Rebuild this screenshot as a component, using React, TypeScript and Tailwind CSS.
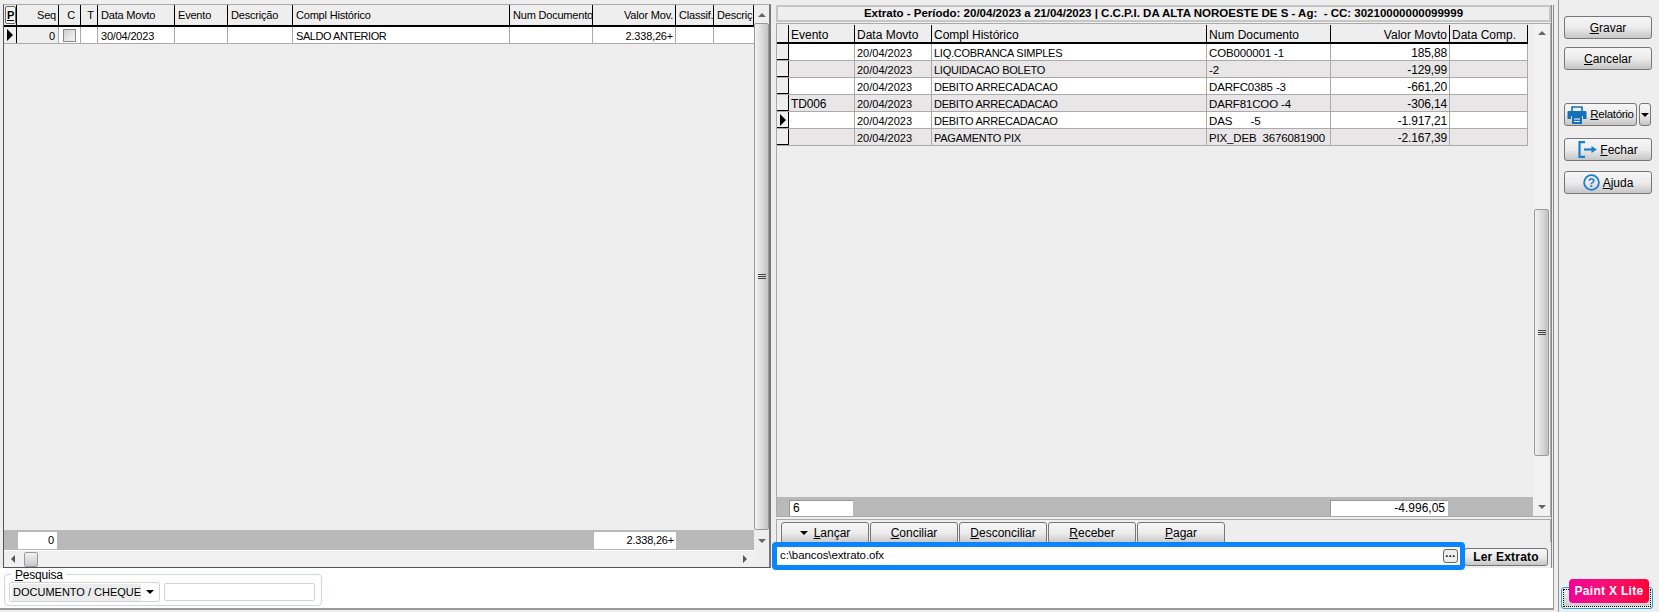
const face = "font-['Liberation_Sans',Arial,sans-serif]";
const raised =
  "bg-gradient-to-b from-[#f6f6f6] via-[#ececec] to-[#c6c6c6] border border-[#777] rounded-[3px] text-[12px] text-black flex items-center justify-center";

const leftCols = [
  { label: "Seq", w: 42, right: true },
  { label: "C", w: 22, center: true },
  { label: "T", w: 17, center: true },
  { label: "Data Movto", w: 77 },
  { label: "Evento", w: 53 },
  { label: "Descrição", w: 65 },
  { label: "Compl Histórico", w: 217 },
  { label: "Num Documento", w: 83 },
  { label: "Valor Mov.", w: 83, right: true },
  { label: "Classif.", w: 38 },
  { label: "Descriç", w: 40 },
];

const rightCols = [
  { label: "Evento", w: 66, cell: "text-[12px] tracking-[-0.15px]" },
  { label: "Data Movto", w: 77, cell: "text-[11px]" },
  { label: "Compl Histórico", w: 275, cell: "text-[11px] tracking-[-0.25px]" },
  { label: "Num Documento", w: 124, cell: "text-[11.5px] tracking-[-0.15px]" },
  { label: "Valor Movto", w: 119, right: true, cell: "text-[12px] tracking-[-0.15px]" },
  { label: "Data Comp.", w: 78, cell: "" },
];

const rightRows = [
  ["", "20/04/2023", "LIQ.COBRANCA SIMPLES", "COB000001 -1", "185,88", ""],
  ["", "20/04/2023", "LIQUIDACAO BOLETO", "-2", "-129,99", ""],
  ["", "20/04/2023", "DEBITO ARRECADACAO", "DARFC0385 -3", "-661,20", ""],
  ["TD006", "20/04/2023", "DEBITO ARRECADACAO", "DARF81COO -4", "-306,14", ""],
  ["", "20/04/2023", "DEBITO ARRECADACAO", "DAS\u00a0\u00a0\u00a0\u00a0\u00a0\u00a0-5", "-1.917,21", ""],
  ["", "20/04/2023", "PAGAMENTO PIX", "PIX_DEB\u00a0\u00a03676081900", "-2.167,39", ""],
];

function Pointer() {
  return <div className="w-0 h-0 border-y-[6px] border-y-transparent border-l-[6px] border-l-black" />;
}

function ArrowUp() {
  return <div className="w-0 h-0 shrink-0 border-x-[4px] border-x-transparent border-b-[4px] border-b-[#666]" />;
}

function ArrowDown({ color = "border-t-[#666]" }: { color?: string }) {
  return <div className={`w-0 h-0 shrink-0 border-x-[4px] border-x-transparent border-t-[4px] ${color}`} />;
}

function Thumb({ className }: { className: string }) {
  return (
    <div className={`${className} shrink-0 rounded-[2px] border border-[#999] bg-gradient-to-r from-[#f2f2f2] via-[#dcdcdc] to-[#c2c2c2] flex flex-col items-center justify-center gap-[1px]`}>
      <div className="w-[8px] h-[1px] bg-[#444]" />
      <div className="w-[8px] h-[1px] bg-[#444]" />
      <div className="w-[8px] h-[1px] bg-[#444]" />
    </div>
  );
}

function PrinterIcon() {
  return (
    <svg width="20" height="18" viewBox="0 0 20 18" className="shrink-0">
      <path d="M5 5V1h10v4" fill="#e8f1f9" stroke="#1570b8" strokeWidth="1.6" />
      <path d="M1.5 5h17a1 1 0 0 1 1 1v7h-3.500v-3H4v3H.5V6a1 1 0 0 1 1-1z" fill="#1570b8" />
      <rect x="5" y="10" width="10" height="8" fill="#1570b8" />
      <path d="M7 13h6M7 15.500h6" stroke="#fff" />
    </svg>
  );
}

function ExitIcon() {
  return (
    <svg width="19" height="17" viewBox="0 0 19 17" fill="none" className="shrink-0">
      <path d="M7 1.200H1.500v14.600H7" stroke="#1b7fd0" strokeWidth="2.200" />
      <path d="M6 8.500h8" stroke="#1b7fd0" strokeWidth="2.200" />
      <path d="M13.500 5 19 8.500 13.500 12z" fill="#1b7fd0" />
    </svg>
  );
}

function HelpIcon() {
  return (
    <svg width="17" height="17" viewBox="0 0 17 17" fill="none" className="shrink-0">
      <circle cx="8.500" cy="8.500" r="7.400" stroke="#1b7fd0" strokeWidth="1.800" />
      <text x="8.500" y="13" textAnchor="middle" fontSize="12" fontWeight="700" fill="#1b7fd0" fontFamily="Liberation Sans">?</text>
    </svg>
  );
}

export default function App() {
  return (
    <div className={`${face} w-[1659px] h-[612px] overflow-hidden bg-[#eeeeee] flex text-[12px] text-black`}>
      <div className="w-[1554px] shrink-0 flex flex-col">
        <div className="h-[568px] shrink-0 flex bg-[#eeeeee]">
          {/* left grid */}
          <div className="w-[768px] h-[564px] mt-[4px] ml-[3px] shrink-0 flex flex-col border-l border-l-[#555] border-t border-t-[#aaa] border-b border-b-[#555] border-r-2 border-r-[#777] text-[11px] tracking-[-0.2px]">
            <div className="h-[546px] shrink-0 flex">
              <div className="w-[750px] shrink-0 flex flex-col">
                <div className="flex h-[22px] shrink-0 border-b-2 border-b-black">
                  <div className="w-[13px] shrink-0 border-r border-r-black flex items-center justify-end">
                    <div className="w-[11px] h-[18px] border border-[#666] rounded-[2px] bg-[#f4f4f4] flex items-center justify-center font-bold underline">P</div>
                  </div>
                  {leftCols.map((c) => (
                    <div
                      key={c.label}
                      style={{ width: c.w }}
                      className={`shrink-0 border-r border-r-black flex items-center overflow-hidden whitespace-nowrap ${c.right ? "justify-end pr-[2px]" : "pl-[3px]"} ${c.center ? "justify-center pl-0" : ""}`}
                    >
                      {c.label}
                    </div>
                  ))}
                </div>
                <div className="flex h-[17px] shrink-0 bg-white border-b border-b-[#aaa] leading-[18px]">
                  <div className="w-[13px] shrink-0 border-r border-r-black bg-[#eeeeee] flex items-center justify-center">
                    <Pointer />
                  </div>
                  <div className="w-[42px] shrink-0 bg-[#eeeeee] border-r border-r-[#aaa] text-right pr-[3px]">0</div>
                  <div className="w-[22px] shrink-0 border-r border-r-[#aaa] flex items-center justify-center">
                    <div className="w-[13px] h-[13px] border border-[#888] bg-gradient-to-br from-[#cfcfcf] to-[#f6f6f6]" />
                  </div>
                  <div className="w-[17px] shrink-0 border-r border-r-[#aaa]" />
                  <div className="w-[77px] shrink-0 border-r border-r-[#aaa] pl-[3px]">30/04/2023</div>
                  <div className="w-[53px] shrink-0 border-r border-r-[#aaa]" />
                  <div className="w-[65px] shrink-0 border-r border-r-[#aaa]" />
                  <div className="w-[217px] shrink-0 border-r border-r-[#aaa] pl-[3px] tracking-[-0.45px]">SALDO ANTERIOR</div>
                  <div className="w-[83px] shrink-0 border-r border-r-[#aaa]" />
                  <div className="w-[83px] shrink-0 border-r border-r-[#aaa] text-right pr-[2px]">2.338,26+</div>
                  <div className="w-[38px] shrink-0 border-r border-r-[#aaa]" />
                </div>
                <div className="flex-1" />
                <div className="h-[21px] shrink-0 bg-[#b9b9b9] flex items-start pt-[2px] border-b border-b-white">
                  <div className="w-[39px] h-[17px] ml-[14px] bg-white text-right pr-[3px] leading-[17px]">0</div>
                  <div className="w-[82px] h-[17px] ml-[537px] bg-white text-right pr-[2px] leading-[17px]">2.338,26+</div>
                </div>
              </div>
              <div className="w-[15px] shrink-0 flex flex-col items-center">
                <div className="mt-[8px]"><ArrowUp /></div>
                <Thumb className="w-[15px] h-[507px] mt-[6px]" />
                <div className="flex-1" />
                <div className="mb-[8px]"><ArrowDown /></div>
              </div>
            </div>
            <div className="h-[16px] shrink-0 flex items-center bg-[#f0f0f0] w-[750px]">
              <div className="ml-[7px] w-0 h-0 border-y-[4px] border-y-transparent border-r-[4px] border-r-[#555]" />
              <div className="ml-[9px] w-[14px] h-[15px] border border-[#999] rounded-[2px] bg-gradient-to-b from-[#f2f2f2] to-[#c8c8c8]" />
              <div className="flex-1" />
              <div className="mr-[7px] w-0 h-0 border-y-[4px] border-y-transparent border-l-[4px] border-l-[#555]" />
            </div>
          </div>

          <div className="w-[5px] shrink-0" />

          {/* right panel */}
          <div className="w-[778px] shrink-0 mt-[5px] h-[563px] flex flex-col border-r-[3px] border-double border-r-[#888]">
            <div className="h-[17px] shrink-0 border-2 border-[#c6c6c6] bg-[#eeeeee] flex items-center justify-center font-bold text-[11.5px] whitespace-nowrap">
              Extrato - Período: 20/04/2023 a 21/04/2023 | C.C.P.I. DA ALTA NOROESTE DE S - Ag:&nbsp; - CC: 30210000000099999
            </div>
            <div className="h-[494px] shrink-0 flex border border-[#aaa] mt-[1px]">
              <div className="w-[756px] shrink-0 flex flex-col pt-[1px]">
                <div className="flex h-[19px] shrink-0 w-[751px] border-b-2 border-b-black">
                  <div className="w-[12px] shrink-0 border-r border-r-black" />
                  {rightCols.map((c) => (
                    <div
                      key={c.label}
                      style={{ width: c.w }}
                      className={`shrink-0 border-r border-r-black px-[2px] pt-[3px] flex items-center overflow-hidden whitespace-nowrap ${c.right ? "justify-end" : ""}`}
                    >
                      {c.label}
                    </div>
                  ))}
                </div>
                {rightRows.map((row, i) => (
                  <div key={i} className={`flex h-[17px] shrink-0 w-[751px] border-b border-b-[#aaa] ${i % 2 ? "bg-[#e8e6e6]" : "bg-white"}`}>
                    <div className="w-[12px] shrink-0 border-r border-r-black border-b border-b-black bg-[#eeeeee] flex items-center justify-center">
                      {i === 4 && <Pointer />}
                    </div>
                    {row.map((cell, j) => (
                      <div
                        key={j}
                        style={{ width: rightCols[j].w }}
                        className={`shrink-0 border-r border-r-[#aaa] px-[2px] pt-[1px] whitespace-pre overflow-hidden leading-[16px] ${rightCols[j].cell} ${rightCols[j].right ? "text-right" : ""}`}
                      >
                        {cell}
                      </div>
                    ))}
                  </div>
                ))}
                <div className="flex-1" />
                <div className="h-[19px] shrink-0 bg-[#b9b9b9] flex items-start pt-[3px]">
                  <div className="w-[64px] h-[16px] ml-[12px] bg-white pl-[3px] leading-[15px] border-t border-l border-[#999]">6</div>
                  <div className="w-[118px] h-[16px] ml-[477px] bg-white text-right pr-[3px] leading-[15px] border-t border-l border-[#999]">-4.996,05</div>
                </div>
              </div>
              <div className="w-[17px] shrink-0 bg-[#f2f2f2] flex flex-col items-center">
                <div className="mt-[7px]"><ArrowUp /></div>
                <Thumb className="w-[15px] h-[247px] mt-[174px]" />
                <div className="flex-1" />
                <div className="mb-[7px]"><ArrowDown /></div>
              </div>
            </div>
            <div className="h-[23px] shrink-0 flex gap-[1px] pl-[4px] pt-[2px] border-x border-t border-[#aaa] mt-[2px]">
              {["Lançar", "Conciliar", "Desconciliar", "Receber", "Pagar"].map((b, i) => (
                <div key={b} className={`${raised} w-[88px] h-[22px] shrink-0 gap-[6px]`}>
                  {i === 0 && <ArrowDown color="border-t-black" />}
                  <span><u>{b[0]}</u>{b.slice(1)}</span>
                </div>
              ))}
            </div>
            <div className="h-[28px] shrink-0 flex items-start">
              <div className="relative z-10 w-[693px] h-[28px] -ml-[4px] shrink-0 border-[5px] border-[#0a84ff] rounded-[4px] bg-white flex items-center justify-between pl-[3px] pr-[2px] text-[11.5px] tracking-[-0.1px]">
                <span>c:\bancos\extrato.ofx</span>
                <div className="w-[15px] h-[14px] border border-[#666] rounded-[3px] bg-[#eee] flex items-center justify-center text-[11px] font-bold leading-none">···</div>
              </div>
              <div className={`${raised} w-[84px] h-[18px] mt-[6px] -ml-[1px] shrink-0 font-bold tracking-[0.2px]`}>Ler Extrato</div>
            </div>
          </div>
        </div>

        {/* search */}
        <div className="h-[42px] shrink-0 bg-white pl-[4px] pt-[6px] border-b-2 border-b-[#999] border-r border-r-[#999]">
          <div className="w-[318px] h-[32px] border border-[#c8d8e4] rounded-[4px] relative flex items-start gap-[4px] pl-[4px] pt-[7px]">
            <span className="absolute -top-[7px] left-[6px] bg-white px-[4px] text-[12px] leading-[14px] tracking-[-0.2px]"><u>P</u>esquisa</span>
            <div className="w-[151px] h-[20px] shrink-0 flex items-center justify-between pr-[5px] pl-[2px] border border-[#d4d4d4] rounded-[2px]">
              <span className="bg-[#ececec] h-[17px] w-[129px] leading-[17px] text-[11px] whitespace-nowrap pl-[1px]">DOCUMENTO / CHEQUE</span>
              <ArrowDown color="border-t-black" />
            </div>
            <div className="w-[151px] h-[18px] mt-[1px] shrink-0 border border-[#d4d4d4] rounded-[2px] bg-white" />
          </div>
        </div>
      </div>

      {/* side buttons */}
      <div className="w-[101px] ml-[4px] shrink-0 border-l border-l-[#999] bg-[#eeeeee] flex flex-col pl-[5px] pr-[7px] pt-[16px] relative">
        <div className={`${raised} h-[23px] shrink-0`}><span><u>G</u>ravar</span></div>
        <div className={`${raised} h-[23px] shrink-0 mt-[8px]`}><span><u>C</u>ancelar</span></div>
        <div className="flex h-[23px] shrink-0 mt-[33px] gap-[2px]">
          <div className={`${raised} w-[73px] gap-[3px]`}><PrinterIcon /><span className="text-[11.5px] tracking-[-0.3px]"><u>R</u>elatório</span></div>
          <div className={`${raised} w-[12px]`}><ArrowDown color="border-t-black" /></div>
        </div>
        <div className={`${raised} h-[23px] shrink-0 mt-[12px] gap-[3px]`}><ExitIcon /><span><u>F</u>echar</span></div>
        <div className={`${raised} h-[23px] shrink-0 mt-[10px] gap-[3px]`}><HelpIcon /><span><u>A</u>juda</span></div>
        <div className="flex-1" />
        <div className="h-[22px] w-[92px] mb-[3px] -ml-[3px] shrink-0 border border-[#29a3dc] rounded-[3px] p-[1px]">
          <div className="w-full h-full border border-dotted border-black bg-gradient-to-b from-[#f0f0f0] to-[#cfcfcf]" />
        </div>
        <div className="absolute left-[10px] top-[579px] w-[80px] h-[24px] rounded-[4px] bg-gradient-to-r from-[#f0009a] to-[#ff0038] text-white font-bold text-[12px] tracking-[0.3px] flex items-center justify-center whitespace-nowrap">Paint X Lite</div>
      </div>
    </div>
  );
}
